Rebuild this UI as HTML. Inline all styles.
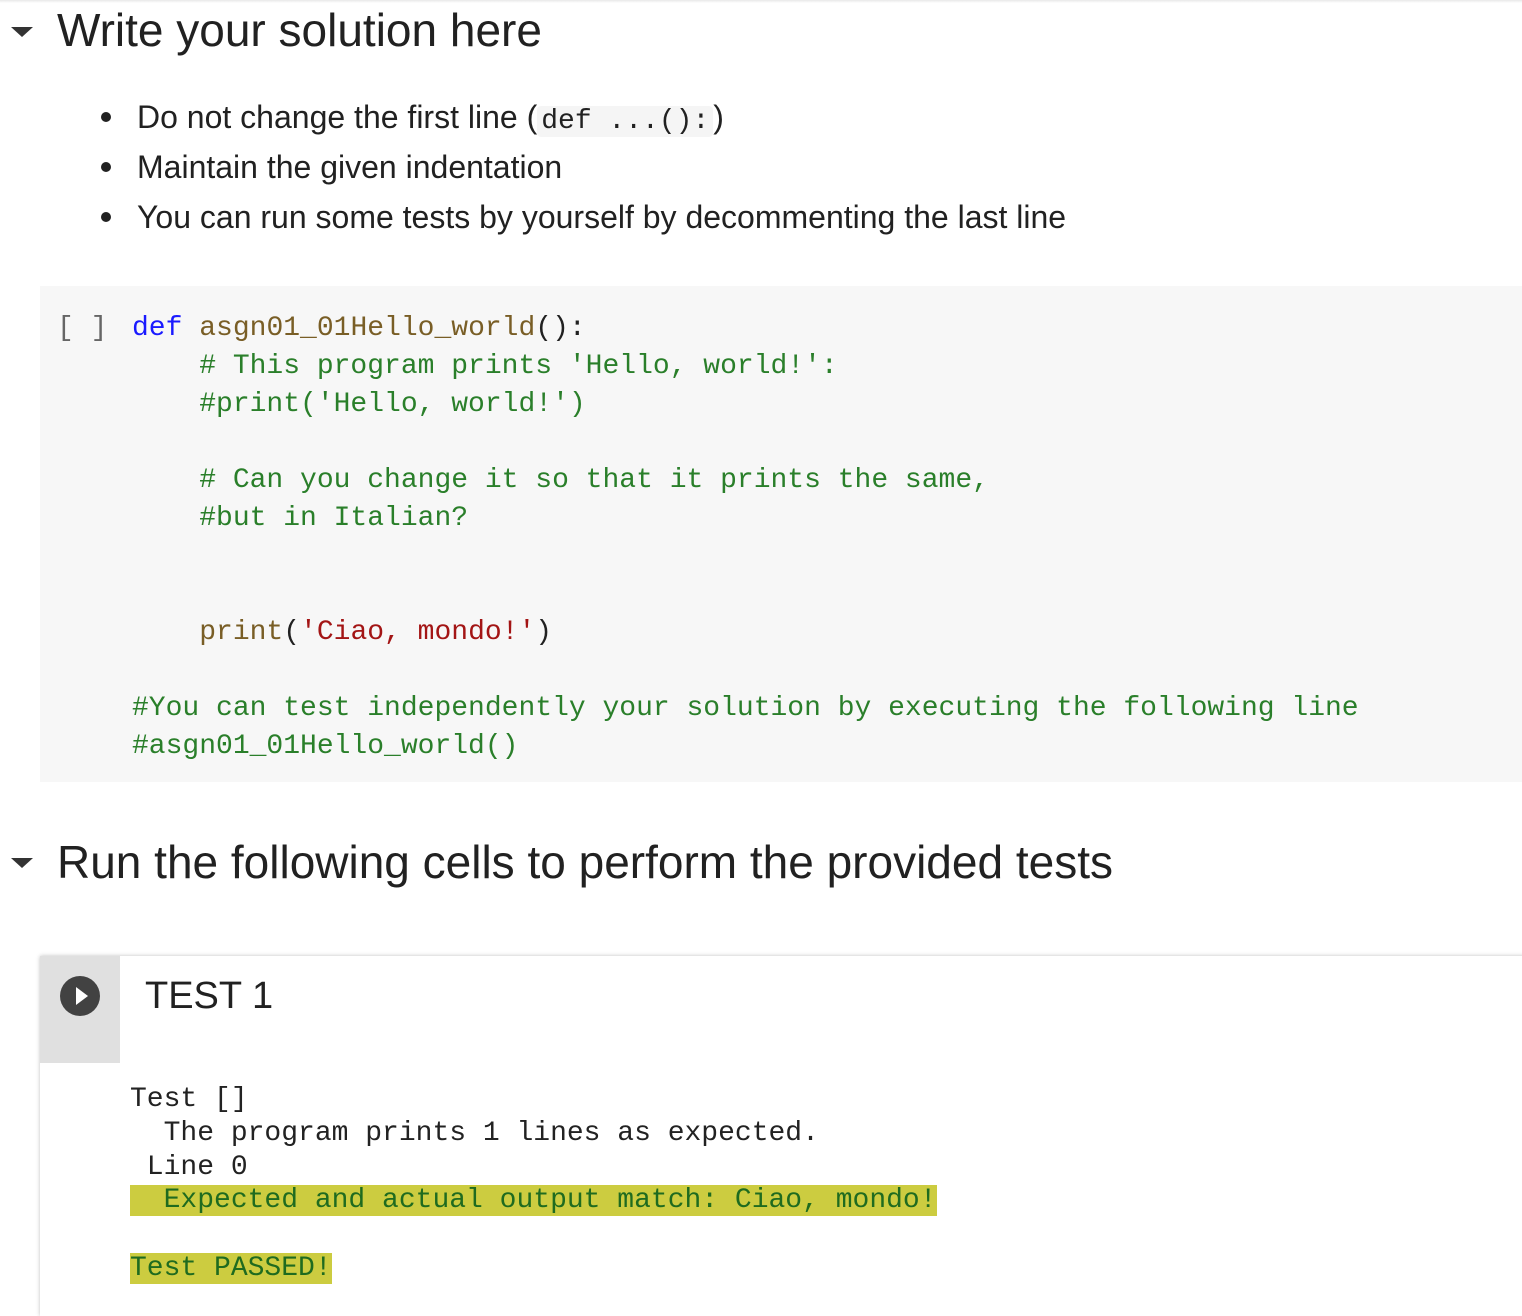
<!DOCTYPE html>
<html><head><meta charset="utf-8"><style>
body{margin:0;width:1522px;height:1290px;background:#fff;position:relative;overflow:hidden;font-family:"Liberation Sans",sans-serif;color:#212121}
.a{position:absolute;white-space:pre}
.m{font-family:"Liberation Mono",monospace}
.h{font-size:46px;line-height:60px}
.b{font-size:32px;line-height:50px;left:137px}
.dot{position:absolute;left:101px;width:10px;height:10px;border-radius:50%;background:#212121}
.tri{position:absolute;left:11px;width:0;height:0;border-left:11px solid transparent;border-right:11px solid transparent;border-top:10px solid #333}
.c{font-size:28px;line-height:38px}
.g{color:#2a7f2a}.k{color:#1a1aff}.f{color:#795e26}.s{color:#a31515}
.o{font-size:28px;line-height:34px;left:130px;color:#222}
.hl{background:#cccc40;color:#1f6b1f}
</style></head><body>
<div style="position:absolute;left:0;top:0;width:1522px;height:3px;background:linear-gradient(#e8e8e8,#fff)"></div>
<div class="tri" style="top:27px"></div>
<div class="a h" style="left:57px;top:0px">Write your solution here</div>
<div class="dot" style="top:112px"></div>
<div class="a b" style="top:92px">Do not change the first line (<span class="m" style="font-size:28px;background:#f5f5f5;border-radius:4px;padding:0 4px">def ...():</span>)</div>
<div class="dot" style="top:162px"></div>
<div class="a b" style="top:142px">Maintain the given indentation</div>
<div class="dot" style="top:212px"></div>
<div class="a b" style="top:192px">You can run some tests by yourself by decommenting the last line</div>

<div style="position:absolute;left:40px;top:286px;width:1482px;height:496px;background:#f7f7f7"></div>
<div class="a m c" style="left:57px;top:310px;color:#666">[ ]</div>
<div class="a m c" style="left:132px;top:310px"><span class="k">def</span> <span class="f">asgn01_01Hello_world</span>():</div>
<div class="a m c g" style="left:132px;top:348px">    # This program prints 'Hello, world!':</div>
<div class="a m c g" style="left:132px;top:386px">    #print('Hello, world!')</div>
<div class="a m c g" style="left:132px;top:462px">    # Can you change it so that it prints the same,</div>
<div class="a m c g" style="left:132px;top:500px">    #but in Italian?</div>
<div class="a m c" style="left:132px;top:614px">    <span class="f">print</span>(<span class="s">'Ciao, mondo!'</span>)</div>
<div class="a m c g" style="left:132px;top:690px">#You can test independently your solution by executing the following line</div>
<div class="a m c g" style="left:132px;top:728px">#asgn01_01Hello_world()</div>

<div class="tri" style="top:858px"></div>
<div class="a h" style="left:57px;top:832px">Run the following cells to perform the provided tests</div>

<div style="position:absolute;left:40px;top:956px;width:1500px;height:360px;background:#fff;box-shadow:0 0 4px rgba(0,0,0,.25)"></div>
<div style="position:absolute;left:40px;top:956px;width:80px;height:107px;background:#e0e0e0"></div>
<div style="position:absolute;left:60px;top:976px;width:40px;height:40px;border-radius:50%;background:#424242"></div>
<div style="position:absolute;left:76px;top:987px;width:0;height:0;border-top:9px solid transparent;border-bottom:9px solid transparent;border-left:12px solid #fff"></div>
<div class="a" style="left:145px;top:972px;font-size:38px;line-height:48px">TEST 1</div>

<div class="a m o" style="top:1083px">Test []</div>
<div class="a m o" style="top:1117px">  The program prints 1 lines as expected.</div>
<div class="a m o" style="top:1151px"> Line 0</div>
<div class="a m o" style="top:1184px"><span class="hl">  Expected and actual output match: Ciao, mondo!</span></div>
<div class="a m o" style="top:1252px"><span class="hl">Test PASSED!</span></div>
</body></html>
